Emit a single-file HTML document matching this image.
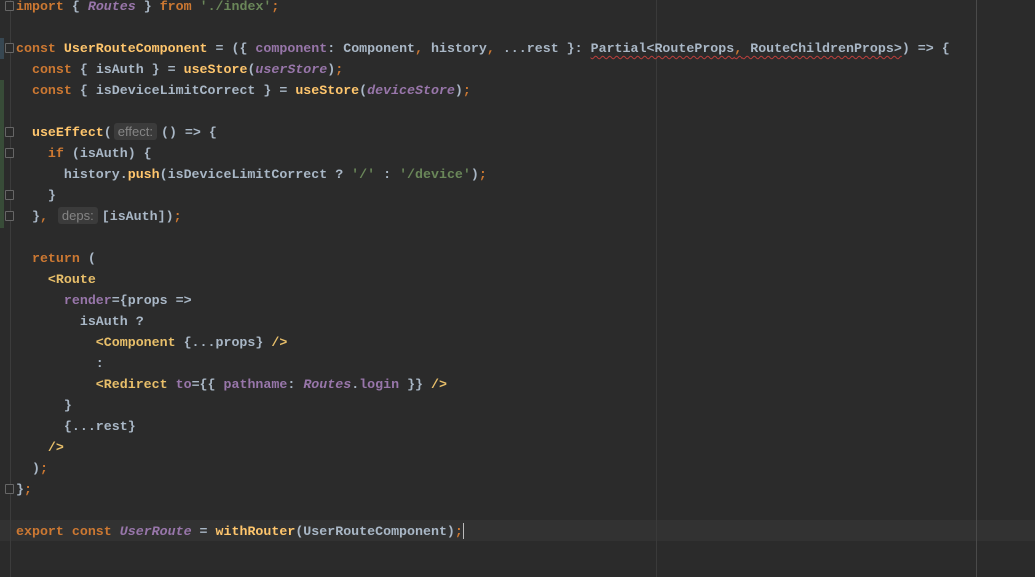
<!DOCTYPE html>
<html><head><meta charset="utf-8"><style>
html,body{margin:0;padding:0;background:#2b2b2b;width:1035px;height:577px;overflow:hidden;position:relative}
.code{position:absolute;left:16px;top:-4px;font-family:"Liberation Mono",monospace;font-size:13.3px;line-height:21px;color:#a9b7c6;white-space:pre;font-weight:bold}
.k{color:#cc7832}.f{color:#ffc66d}.p{color:#9876aa}.pi{color:#9876aa;font-style:italic}.s{color:#6a8759}.t{color:#e8bf6a}
.h{display:inline-block;background:#3b3b3b;color:#858585;font-family:"Liberation Sans",sans-serif;font-size:13px;font-weight:normal;line-height:17px;padding:0 4px;border-radius:3px;margin:0 4px 0 2px}
.vl{position:absolute;top:0;bottom:0;width:1px;background:#3a3a3a}
.cur{position:absolute;left:0;right:0;top:520px;height:21px;background:#323232}
.wavy{text-decoration:underline wavy #bc3f3c;text-decoration-thickness:1px;text-underline-offset:3px}
.fold{position:absolute;left:5px;width:7px;height:8px;border:1px solid #666;border-radius:1px;background:#2b2b2b}
</style></head><body>
<div class="cur"></div>
<div class="vl" style="left:10px;background:#3c3c3c"></div>
<div class="vl" style="left:656px"></div>
<div class="vl" style="left:976px;background:#4a4a4a"></div>
<div style="position:absolute;left:0;top:80px;width:4px;height:148px;background:#384c38"></div>
<div style="position:absolute;left:0;top:38px;width:4px;height:21px;background:#374752"></div>
<div class="fold" style="top:1px"></div>
<div class="fold" style="top:43px"></div>
<div class="fold" style="top:127px"></div>
<div class="fold" style="top:148px"></div>
<div class="fold" style="top:190px"></div>
<div class="fold" style="top:211px"></div>
<div class="fold" style="top:484px"></div>
<div class="code"><span class="k">import</span> { <span class="pi">Routes</span> } <span class="k">from</span> <span class="s">'./index'</span><span class="k">;</span>

<span class="k">const</span> <span class="f">UserRouteComponent</span> = ({ <span class="p">component</span>: Component<span class="k">,</span> history<span class="k">,</span> ...rest }: <span class="wavy">Partial&lt;RouteProps<span class="k">,</span> RouteChildrenProps&gt;</span>) =&gt; {
  <span class="k">const</span> { isAuth } = <span class="f">useStore</span>(<span class="pi">userStore</span>)<span class="k">;</span>
  <span class="k">const</span> { isDeviceLimitCorrect } = <span class="f">useStore</span>(<span class="pi">deviceStore</span>)<span class="k">;</span>

  <span class="f">useEffect</span>(<span class="h">effect:</span>() =&gt; {
    <span class="k">if</span> (isAuth) {
      history.<span class="f">push</span>(isDeviceLimitCorrect ? <span class="s">'/'</span> : <span class="s">'/device'</span>)<span class="k">;</span>
    }
  }<span class="k">,</span> <span class="h">deps:</span>[isAuth])<span class="k">;</span>

  <span class="k">return</span> (
    <span class="t">&lt;Route</span>
      <span class="p">render</span>={props =&gt;
        isAuth ?
          <span class="t">&lt;Component</span> {...props} <span class="t">/&gt;</span>
          :
          <span class="t">&lt;Redirect</span> <span class="p">to</span>={{ <span class="p">pathname</span>: <span class="pi">Routes</span>.<span class="p">login</span> }} <span class="t">/&gt;</span>
      }
      {...rest}
    <span class="t">/&gt;</span>
  )<span class="k">;</span>
}<span class="k">;</span>

<span class="k">export const</span> <span class="pi">UserRoute</span> = <span class="f">withRouter</span>(UserRouteComponent)<span class="k">;</span><span style="display:inline-block;width:1px;height:16px;background:#bbb;vertical-align:middle"></span></div>
</body></html>
